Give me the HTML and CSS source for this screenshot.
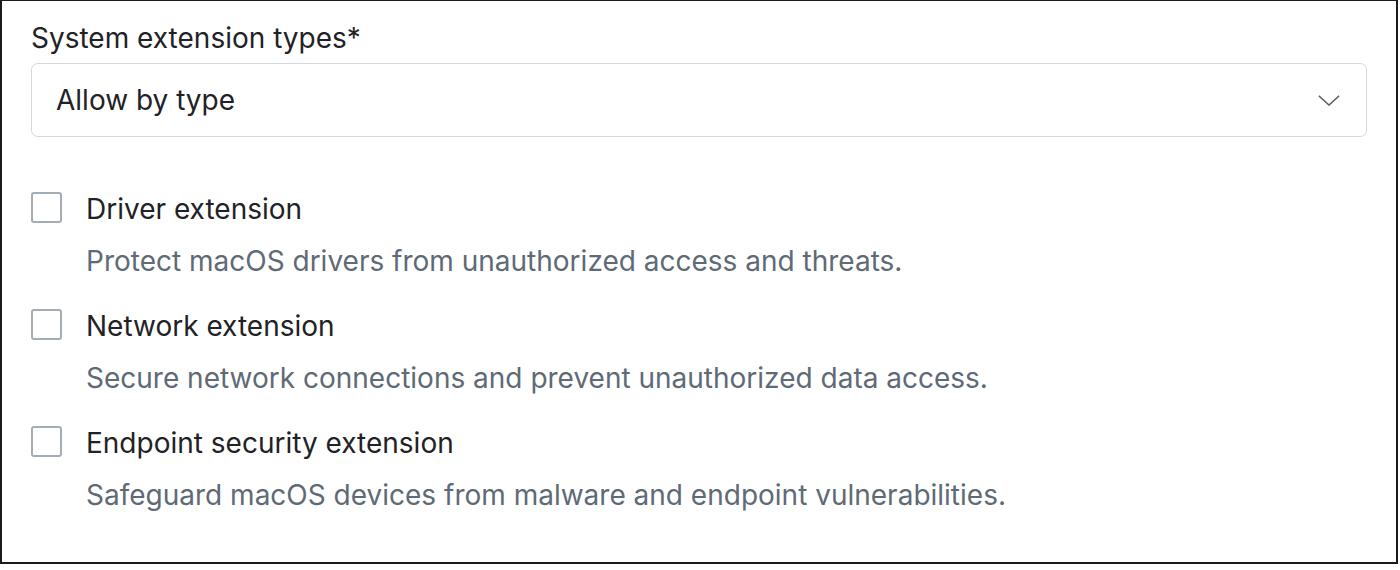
FILE: index.html
```html
<!DOCTYPE html>
<html lang="en">
<head>
    <meta charset="UTF-8">
    <meta name="viewport" content="width=device-width, initial-scale=1.0">
    <title>System extensions</title>
    <link rel="stylesheet" href="styles.css">
</head>
<body>
    <div class="frame">
        <label class="field-label">System extension types*</label>
        <div class="select">
            <span>Allow by type</span>
            <svg class="chevron" viewBox="0 0 24 12">
                <path d="M1 1l11 10L23 1"/>
            </svg>
        </div>

        <div class="options">
            <div class="option">
                <span class="box"></span>
                <div class="option-text">
                    <div class="option-title">Driver extension</div>
                    <div class="option-desc">Protect macOS drivers from unauthorized access and threats.</div>
                </div>
            </div>
            <div class="option">
                <span class="box"></span>
                <div class="option-text">
                    <div class="option-title">Network extension</div>
                    <div class="option-desc">Secure network connections and prevent unauthorized data access.</div>
                </div>
            </div>
            <div class="option">
                <span class="box"></span>
                <div class="option-text">
                    <div class="option-title">Endpoint security extension</div>
                    <div class="option-desc">Safeguard macOS devices from malware and endpoint vulnerabilities.</div>
                </div>
            </div>
        </div>
    </div>
</body>
</html>
```

FILE: styles.css
```css
* {
    margin: 0;
    padding: 0;
    box-sizing: border-box;
}
body {
    background: #fff;
    font-family: Inter, "Noto Sans", sans-serif;
    font-size: 28px;
    line-height: 36px;
    color: #1f2226;
}
.frame {
    width: 1398px;
    height: 564px;
    border: 2px solid #1b1b1b;
    border-top-width: 1px;
    padding: 19px 29px 0 29px;
}
.field-label {
    display: block;
}
.select {
    margin-top: 7px;
    height: 74px;
    border: 1.5px solid #d3d8dd;
    border-radius: 7px;
    display: flex;
    align-items: center;
    justify-content: space-between;
    padding: 0 26px 0 24px;
}
.chevron {
    width: 22px;
    height: 11px;
    fill: none;
    stroke: #5b636b;
    stroke-width: 1.6;
}
.options {
    margin-top: 54px;
    display: flex;
    flex-direction: column;
    gap: 29px;
}
.option {
    display: flex;
    gap: 24px;
}
.box {
    width: 31px;
    height: 31px;
    margin-top: 1px;
    border: 2px solid #a4adb6;
    border-radius: 3px;
    flex-shrink: 0;
}
.option-desc {
    margin-top: 16px;
    color: #5e6a76;
}
```
